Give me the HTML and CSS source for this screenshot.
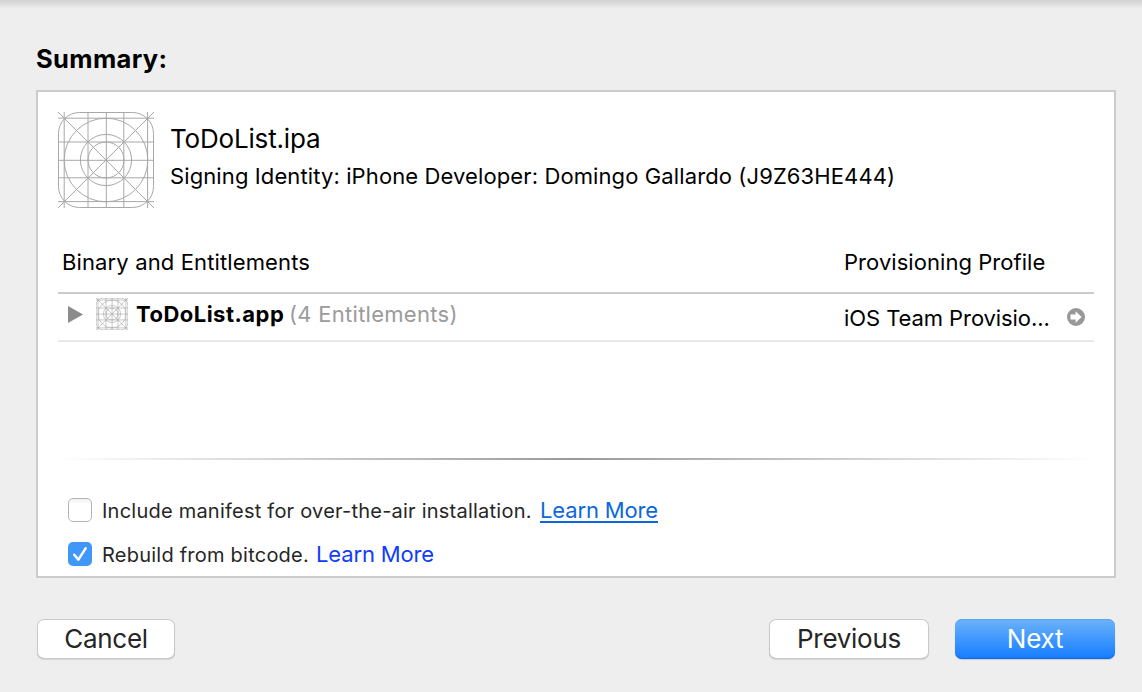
FILE: index.html
```html
<!DOCTYPE html>
<html lang="en">
<head>
<meta charset="utf-8">
<title>Summary</title>
<link rel="stylesheet" href="styles.css">
</head>
<body>
<svg width="0" height="0" class="defs">
  <symbol id="app-grid" viewBox="0 0 96 96">
    <rect x=".5" y=".5" width="95" height="95" rx="21"/>
    <path d="M6.2 0V96M30 0V96M48.3 0V96M65.8 0V96M89.6 0V96M0 6.2H96M0 30H96M0 48.3H96M0 65.8H96M0 89.6H96M0 0L96 96M96 0L0 96"/>
    <circle cx="48" cy="48" r="41.8"/>
    <circle cx="48" cy="48" r="25.6"/>
    <circle cx="48" cy="48" r="18"/>
  </symbol>
</svg>
<main class="sheet">
  <h1 class="title"><span>Summary:</span></h1>
  <section class="panel">
    <header class="archive">
      <svg class="archive-icon"><use href="#app-grid"/></svg>
      <div class="archive-text">
        <div class="archive-name"><span>ToDoList.ipa</span></div>
        <div class="identity"><span>Signing Identity: iPhone Developer: Domingo Gallardo (J9Z63HE444)</span></div>
      </div>
    </header>
    <div class="table">
      <div class="table-head">
        <span class="col-main head-main">Binary and Entitlements</span>
        <span class="head-profile">Provisioning Profile</span>
      </div>
      <div class="table-row">
        <div class="col-main binary">
          <svg class="disclosure" viewBox="0 0 16 18"><path d="M0 0L16 9L0 18Z"/></svg>
          <svg class="binary-icon"><use href="#app-grid"/></svg>
          <span class="binary-name">ToDoList.app</span>
          <span class="entitlements">(4 Entitlements)</span>
        </div>
        <div class="profile">
          <span class="profile-name">iOS Team Provisio...</span>
          <svg class="go" viewBox="0 0 18 18"><circle cx="9" cy="9" r="9"/><path d="M3.5 6.4H8.6V3.2L14.6 9L8.6 14.8V11.6H3.5Z"/></svg>
        </div>
      </div>
    </div>
    <div class="divider"></div>
    <div class="options">
      <div class="option">
        <span class="checkbox"></span>
        <span class="label label-manifest">Include manifest for over-the-air installation.</span>
        <a class="link link-hover">Learn More</a>
      </div>
      <div class="option">
        <span class="checkbox checked"><svg viewBox="0 0 24 24"><path d="M6.2 12.8L10.4 17.6L17.6 6.4"/></svg></span>
        <span class="label label-bitcode">Rebuild from bitcode.</span>
        <a class="link">Learn More</a>
      </div>
    </div>
  </section>
  <footer class="actions">
    <button class="button cancel"><span>Cancel</span></button>
    <button class="button previous"><span>Previous</span></button>
    <button class="button next"><span>Next</span></button>
  </footer>
</main>
</body>
</html>
```
FILE: styles.css
```css
* { box-sizing: border-box; }
body {
  margin: 0;
  height: 692px;
  overflow: hidden;
  background: #eee;
  color: #000;
  font-family: Inter, "Liberation Sans", sans-serif;
  font-size: 22px;
  white-space: nowrap;
}
.defs { position: absolute; }
.sheet {
  height: 692px;
  padding: 42px 26px 0 36px;
  background: linear-gradient(#d4d4d4, #dadada 3px, #e8e8e8 7px, #eee 8px);
}
.title {
  margin: 0 0 14px;
  font-size: 25.5px;
  line-height: 34px;
  font-weight: 700;
  letter-spacing: 0.35px;
}
.panel {
  height: 488px;
  padding: 20px;
  border: 2px solid #cbcbcb;
  background: #fff;
}
.archive { display: flex; gap: 16px; height: 96px; }
.archive-icon { width: 96px; height: 96px; fill: none; stroke: #a8a8a8; stroke-width: 1; }
.archive-text { padding-top: 10px; }
.archive-name { font-size: 26px; line-height: 34px; letter-spacing: -0.18px; }
.identity { margin-top: 6px; line-height: 28px; letter-spacing: 0.11px; }
.table { margin-top: 34px; }
.table-head {
  display: flex;
  height: 52px;
  padding: 6px 0 0 4px;
  border-bottom: 2px solid #cbcbcb;
  line-height: 28px;
}
.head-main { letter-spacing: 0.13px; }
.head-profile { letter-spacing: 0.05px; }
.col-main { width: 782px; flex: none; }
.table-row { display: flex; height: 48px; padding-left: 4px; border-bottom: 2px solid #e9e9e9; line-height: 28px; }
.binary { display: flex; align-items: center; height: 40px; padding-left: 6px; }
.disclosure { width: 15px; height: 17px; margin-right: 13px; fill: #8b8b8b; }
.binary-icon { width: 32px; height: 32px; margin-right: 8px; fill: none; stroke: #a2a2a2; stroke-width: 1.7; }
.binary-name { width: 153px; font-weight: 700; letter-spacing: 0.48px; }
.entitlements { color: #9b9b9b; letter-spacing: 0.28px; }
.profile { display: flex; align-items: center; height: 46px; }
.profile-name { width: 223px; padding-top: 1px; letter-spacing: -0.08px; }
.go { width: 18px; height: 18px; fill: #989898; }
.go path { fill: #fff; }
.divider {
  height: 2px;
  margin-top: 116px;
  background: linear-gradient(90deg, #fff, #999 50%, #fff);
}
.options { padding: 36px 0 0 10px; }
.option { display: flex; align-items: center; height: 28px; margin-bottom: 16px; color: #262626; font-size: 20px; line-height: 28px; }
.checkbox {
  width: 24px;
  height: 24px;
  margin-right: 10px;
  border: 1px solid #b4b4b4;
  border-radius: 5px;
  background: linear-gradient(#f1f1f1, #fff 5px);
  flex: none;
}
.checked { border: 0; background: #3f98f7; }
.checked svg { display: block; width: 24px; height: 24px; fill: none; stroke: #fff; stroke-width: 2.5; stroke-linecap: round; stroke-linejoin: round; }
.label { padding-top: 2px; letter-spacing: 0.23px; }
.label-manifest { width: 438px; }
.label-bitcode { width: 214px; }
.link { color: #0f3cff; font-size: 22px; letter-spacing: -0.14px; }
.link-hover { padding-top: 2px; color: #0b68da; border-bottom: 2px solid #0b68da; line-height: 21px; }
.actions { display: flex; margin-top: 41px; padding-left: 1px; }
.button {
  height: 40px;
  padding: 0;
  border: 0;
  border-radius: 7px;
  background: #fff;
  box-shadow: inset 0 0 0 1px #c9c9c9, inset 0 -1px #b0b0b0, 0 1px 1px #d4d4d4;
  color: #262626;
  font: 26px/40px Inter, "Liberation Sans", sans-serif;
  letter-spacing: -0.28px;
}
.cancel { width: 138px; }
.previous { width: 160px; margin-left: 594px; }
.next {
  width: 160px;
  margin-left: 26px;
  background: linear-gradient(#6cb3fa, #147cff);
  box-shadow: inset 0 1px #5ba5f3, inset 0 -1px #1068ee, 0 1px 1px #ccc;
  color: #fff;
}
```
